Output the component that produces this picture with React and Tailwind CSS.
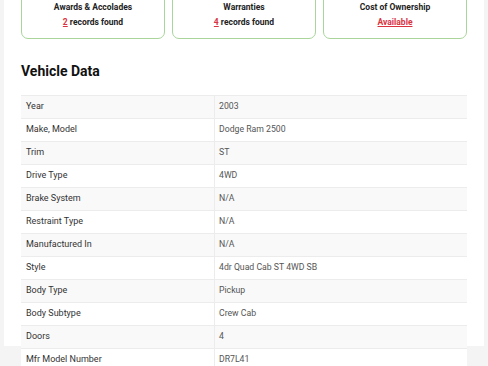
export default function App() {
  const rows = [
    ["Year", "2003"],
    ["Make, Model", "Dodge Ram 2500"],
    ["Trim", "ST"],
    ["Drive Type", "4WD"],
    ["Brake System", "N/A"],
    ["Restraint Type", "N/A"],
    ["Manufactured In", "N/A"],
    ["Style", "4dr Quad Cab ST 4WD SB"],
    ["Body Type", "Pickup"],
    ["Body Subtype", "Crew Cab"],
    ["Doors", "4"],
    ["Mfr Model Number", "DR7L41"],
  ];
  return (
    <div className="w-[488px] h-[366px] overflow-hidden bg-[#f4f4f4]" style={{ fontFamily: "Roboto, 'Liberation Sans', sans-serif" }}>
      <div className="mx-[4px] bg-white px-[17px] h-full">
        <div className="grid grid-cols-3 gap-[7px] -mt-[20px]">
          <div className="border border-[#a9d59a] rounded-[7px] pt-[19px] pb-[10px] flex flex-col items-center">
            <div className="text-[8.5px] font-bold text-[#222] leading-[12px] mt-[1px]">Awards &amp; Accolades</div>
            <div className="text-[8.5px] font-bold text-[#222] leading-[12px] mt-[3px]"><span className="text-[#d9333f] underline">2</span> records found</div>
          </div>
          <div className="border border-[#a9d59a] rounded-[7px] pt-[19px] pb-[10px] flex flex-col items-center">
            <div className="text-[8.5px] font-bold text-[#222] leading-[12px] mt-[1px]">Warranties</div>
            <div className="text-[8.5px] font-bold text-[#222] leading-[12px] mt-[3px]"><span className="text-[#d9333f] underline">4</span> records found</div>
          </div>
          <div className="border border-[#a9d59a] rounded-[7px] pt-[19px] pb-[10px] flex flex-col items-center">
            <div className="text-[8.5px] font-bold text-[#222] leading-[12px] mt-[1px]">Cost of Ownership</div>
            <div className="text-[8.5px] font-bold text-[#d9333f] underline leading-[12px] mt-[3px]">Available</div>
          </div>
        </div>
        <h2 className="text-[14px] font-bold text-[#111] leading-[20px] mt-[22px]">Vehicle Data</h2>
        <div className="mt-[14px] border-t border-[#ececec]">
          {rows.map(([k, v], i) => (
            <div key={k} className={`grid grid-cols-[194px_1fr] h-[23px] border-b border-[#ececec] ${i % 2 === 0 ? "bg-[#f9f9f9]" : "bg-white"}`}>
              <div className="pl-[5px] flex items-center text-[9px] text-[#333] border-r border-[#ececec]">{k}</div>
              <div className="pl-[4px] flex items-center text-[8.7px] text-[#555]">{v}</div>
            </div>
          ))}
        </div>
      </div>
    </div>
  );
}
